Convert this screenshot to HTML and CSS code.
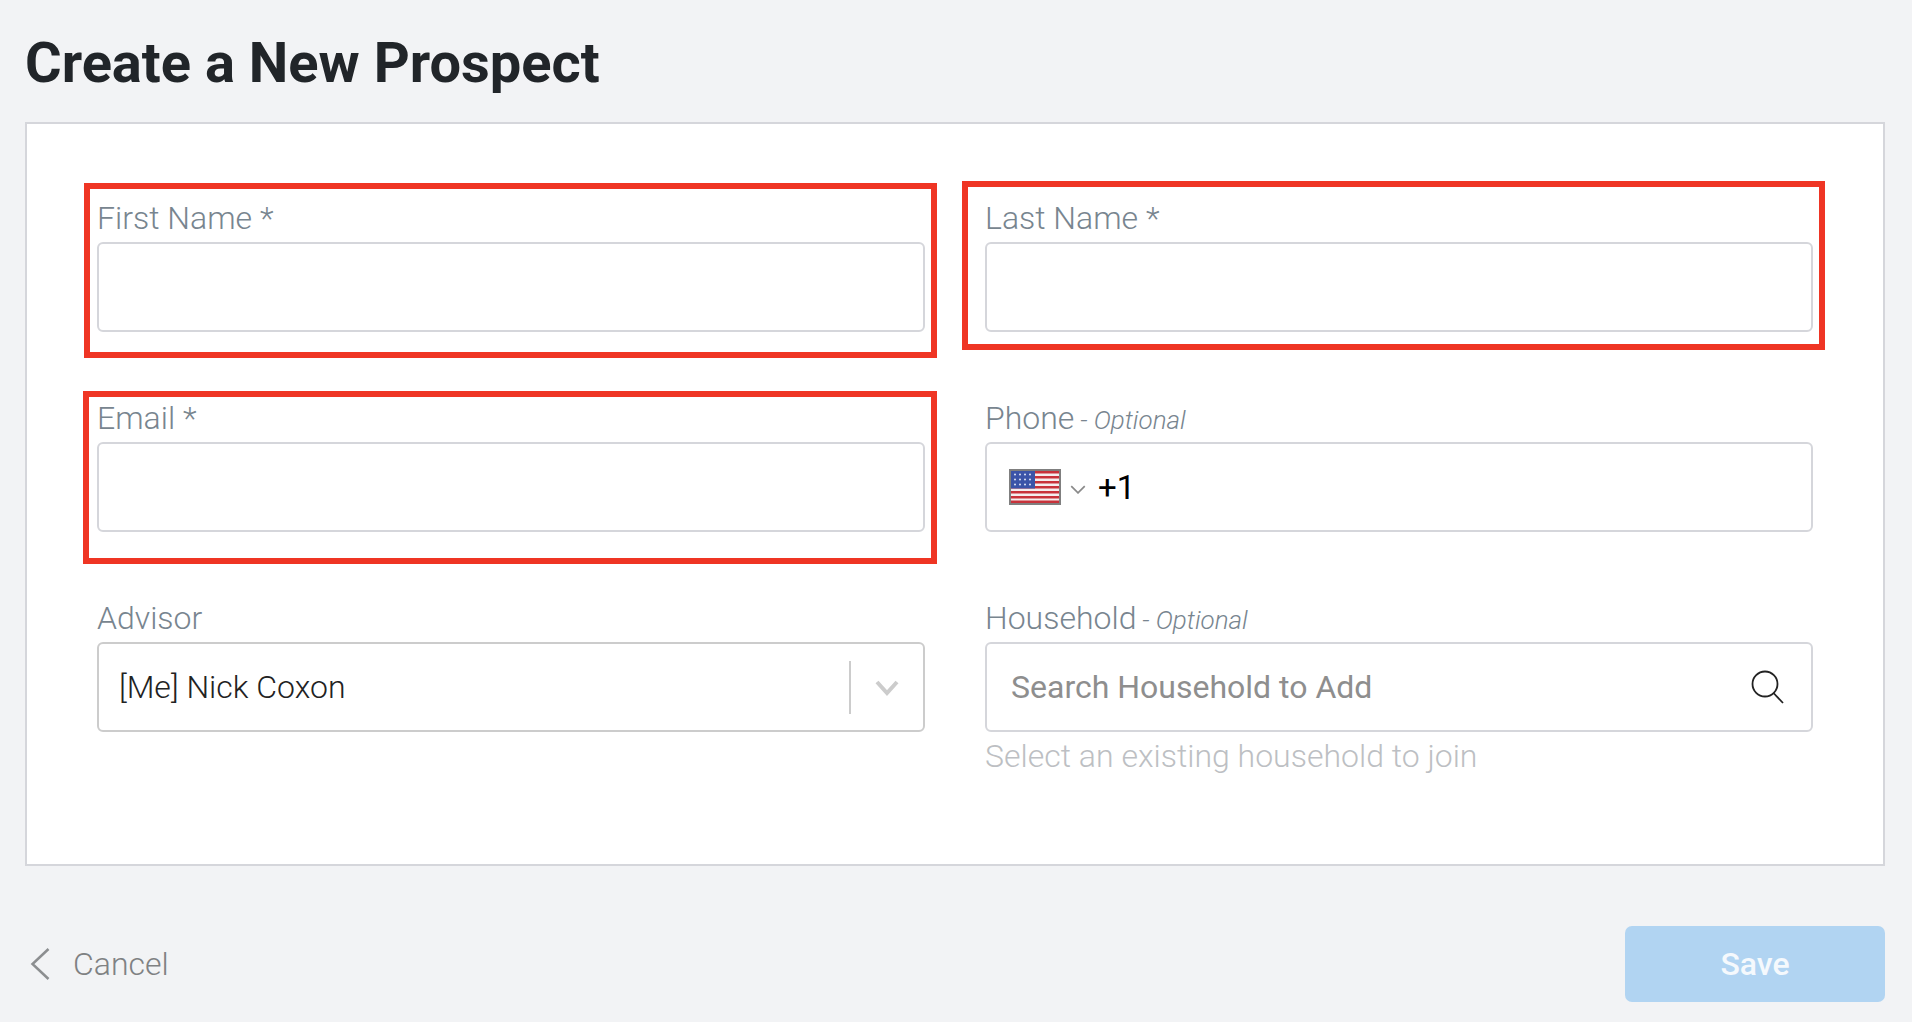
FILE: index.html
```html
<!DOCTYPE html>
<html lang="en">
<head>
<meta charset="utf-8">
<title>Create a New Prospect</title>
<link rel="stylesheet" href="styles.css">
</head>
<body>
<main class="page">
  <h1 class="title">Create a New Prospect</h1>
  <form class="card">
    <div class="fields">
      <div class="field">
        <label class="label">First Name *</label>
        <input class="box" type="text">
      </div>
      <div class="field">
        <label class="label">Last Name *</label>
        <input class="box" type="text">
      </div>
      <div class="field">
        <label class="label">Email *</label>
        <input class="box" type="text">
      </div>
      <div class="field">
        <label class="label">Phone <em class="opt">- Optional</em></label>
        <div class="box phone">
          <svg class="flag" viewBox="0 0 52 36" aria-hidden="true">
            <rect width="52" height="36" fill="#7f7f7f"/>
            <rect x="2" y="2" width="48" height="32" fill="#f4eeee"/>
            <g fill="#c8323a">
              <rect x="2" y="2" width="48" height="2.5"/>
              <rect x="2" y="7" width="48" height="2.5"/>
              <rect x="2" y="12" width="48" height="2.5"/>
              <rect x="2" y="17" width="48" height="2.5"/>
              <rect x="2" y="22" width="48" height="2.5"/>
              <rect x="2" y="27" width="48" height="2.5"/>
              <rect x="2" y="31.5" width="48" height="2.5"/>
            </g>
            <rect x="2" y="2" width="24" height="17.5" fill="#3b54a8"/>
            <g fill="#dfe4f4">
              <circle cx="6" cy="5.500" r="1"/><circle cx="11" cy="5.500" r="1"/><circle cx="16" cy="5.500" r="1"/><circle cx="21" cy="5.500" r="1"/>
              <circle cx="6" cy="10.500" r="1"/><circle cx="11" cy="10.500" r="1"/><circle cx="16" cy="10.500" r="1"/><circle cx="21" cy="10.500" r="1"/>
              <circle cx="6" cy="15.500" r="1"/><circle cx="11" cy="15.500" r="1"/><circle cx="16" cy="15.500" r="1"/><circle cx="21" cy="15.500" r="1"/>
            </g>
          </svg>
          <svg class="flag-caret" viewBox="0 0 14 8" aria-hidden="true"><path d="M1 1l6 6 6-6"/></svg>
          <span class="dial">+1</span>
        </div>
      </div>
      <div class="field">
        <label class="label">Advisor</label>
        <div class="box select">
          <span class="select-value">[Me] Nick Coxon</span>
          <span class="select-sep"></span>
          <svg class="select-caret" viewBox="0 0 24 16" aria-hidden="true"><path d="M2 2l10 11L22 2"/></svg>
        </div>
      </div>
      <div class="field">
        <label class="label">Household <em class="opt">- Optional</em></label>
        <div class="box search">
          <span class="search-text">Search Household to Add</span>
          <svg class="search-icon" viewBox="0 0 34 34" aria-hidden="true"><circle cx="14" cy="14" r="12.500"/><path d="M22.500 23l9.500 10"/></svg>
        </div>
        <p class="help">Select an existing household to join</p>
      </div>
    </div>
    <span class="mark mark-first"></span>
    <span class="mark mark-last"></span>
    <span class="mark mark-email"></span>
  </form>
  <footer class="actions">
    <a class="cancel">
      <svg class="cancel-icon" viewBox="0 0 20 32" aria-hidden="true"><path d="M18 1L2 16l16 15"/></svg>
      <span>Cancel</span>
    </a>
    <button class="save" type="button">Save</button>
  </footer>
</main>
</body>
</html>
```

FILE: styles.css
```css
* { box-sizing: border-box; }
html, body { margin: 0; height: 100%; }
body {
  background: #f2f3f5;
  font-family: Roboto, "Liberation Sans", sans-serif;
  overflow: hidden;
}
.page { padding: 0 27px 0 25px; }
.title {
  margin: 0;
  height: 122px;
  padding-top: 30px;
  font-size: 56px;
  line-height: 66px;
  font-weight: 700;
  color: #212529;
}
.card {
  position: relative;
  height: 744px;
  background: #fff;
  border: 2px solid #d5d6db;
  padding: 78px 70px 0;
}
.fields {
  display: grid;
  grid-template-columns: 1fr 1fr;
  column-gap: 60px;
  row-gap: 70px;
}
.field { position: relative; min-width: 0; }
.label {
  display: block;
  height: 40px;
  font-size: 32px;
  line-height: 32px;
  font-weight: 300;
  color: #78858f;
}
.opt { margin-left: -2px; font-size: 26px; font-style: italic; }
.box {
  display: flex;
  align-items: center;
  width: 100%;
  height: 90px;
  background: #fff;
  border: 2px solid #d5d6db;
  border-radius: 6px;
  outline: none;
}
.phone { padding-left: 22px; }
.flag { width: 52px; height: 36px; flex: none; }
.flag-caret {
  width: 16px;
  height: 9px;
  margin: 4px 0 0 9px;
  flex: none;
  fill: none;
  stroke: #8a8a8a;
  stroke-width: 1.500;
}
.dial { margin-left: 12px; font-size: 33px; color: #000; }
.select { padding-left: 20px; border-color: #cccccc; }
.select-value { flex: 1; font-size: 32px; font-weight: 300; color: #222; }
.select-sep { width: 2px; height: 53px; background: #cccccc; }
.select-caret {
  width: 24px;
  height: 16px;
  margin: 2px 24px 0 24px;
  fill: none;
  stroke: #cccccc;
  stroke-width: 4;
}
.search { padding: 0 26px 0 24px; justify-content: space-between; }
.search-text { font-size: 32px; color: #8e8e8e; }
.search-icon {
  width: 34px;
  height: 34px;
  fill: none;
  stroke: #222;
  stroke-width: 1.800;
}
.help {
  position: absolute;
  left: 0;
  top: 134px;
  margin: 0;
  font-size: 32px;
  line-height: 40px;
  font-weight: 300;
  white-space: nowrap;
  color: #bdbfc3;
}
.mark { position: absolute; border: 6px solid #ef3524; pointer-events: none; }
.mark-first { left: 57px; top: 59px; width: 853px; height: 175px; }
.mark-last { left: 935px; top: 57px; width: 863px; height: 169px; }
.mark-email { left: 56px; top: 267px; width: 854px; height: 173px; }
.actions {
  display: flex;
  justify-content: space-between;
  align-items: center;
  margin-top: 60px;
}
.cancel {
  display: flex;
  align-items: center;
  padding-left: 5px;
  font-size: 32px;
  font-weight: 300;
  color: #7f8183;
}
.cancel-icon {
  width: 21px;
  height: 32px;
  margin-right: 22px;
  fill: none;
  stroke: #8c8e90;
  stroke-width: 2.500;
}
.save {
  width: 260px;
  height: 76px;
  border: 0;
  border-radius: 7px;
  background: #b1d4f2;
  color: #f5f9fd;
  font-family: inherit;
  font-size: 32px;
  font-weight: 500;
}
```
